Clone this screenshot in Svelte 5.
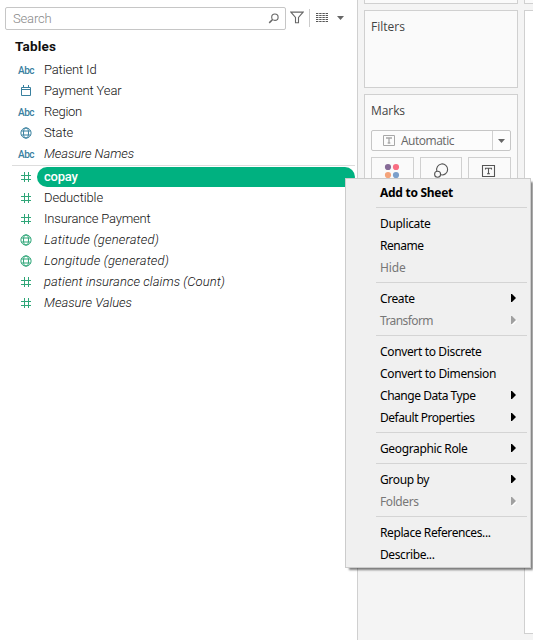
<script>
  const dimensions = [
    { icon: 'abc', label: 'Patient Id', width: 52.5 },
    { icon: 'date', label: 'Payment Year', width: 77.5 },
    { icon: 'abc', label: 'Region', width: 38 },
    { icon: 'globe', label: 'State', width: 29 },
    { icon: 'abc', label: 'Measure Names', width: 90, italic: true },
  ];
  const measures = [
    { icon: 'hash', label: 'copay', width: 33.5, selected: true },
    { icon: 'hash', label: 'Deductible', width: 59 },
    { icon: 'hash', label: 'Insurance Payment', width: 106.5 },
    { icon: 'globe', label: 'Latitude (generated)', width: 115, italic: true },
    { icon: 'globe', label: 'Longitude (generated)', width: 125, italic: true },
    { icon: 'hash', label: 'patient insurance claims (Count)', width: 181, italic: true },
    { icon: 'hash', label: 'Measure Values', width: 88, italic: true },
  ];
  const menu = [
    [{ label: 'Add to Sheet', width: 73, bold: true }],
    [{ label: 'Duplicate', width: 50.5 }, { label: 'Rename', width: 43.5 }, { label: 'Hide', width: 25.5, off: true }],
    [{ label: 'Create', width: 34.5, sub: true }, { label: 'Transform', width: 53, sub: true, off: true }],
    [
      { label: 'Convert to Discrete', width: 101.5 },
      { label: 'Convert to Dimension', width: 116 },
      { label: 'Change Data Type', width: 95.5, sub: true },
      { label: 'Default Properties', width: 94.5, sub: true },
    ],
    [{ label: 'Geographic Role', width: 87.5, sub: true }],
    [{ label: 'Group by', width: 49, sub: true }, { label: 'Folders', width: 38.5, sub: true, off: true }],
    [{ label: 'Replace References...', width: 110.5 }, { label: 'Describe...', width: 54.5 }],
  ];

  function track(node, width) {
    const natural = node.getBoundingClientRect().width;
    node.style.letterSpacing = (width - natural) / node.textContent.length + 'px';
  }
</script>

{#snippet fieldIcon(kind)}
  {#if kind === 'abc'}
    <span class="abc" use:track={16}>Abc</span>
  {:else if kind === 'date'}
    <svg width="12" height="12" viewBox="0 0 12 12"><path d="M1.5 2.5h9v8h-9zM1 4.5h10M3.5 0v3M8.5 0v3" /></svg>
  {:else if kind === 'globe'}
    <svg width="12" height="12" viewBox="0 0 12 12"><circle cx="6" cy="6" r="5.1" /><ellipse cx="6" cy="6" rx="2.5" ry="5.1" /><path d="M1.5 4h9M1.5 8h9" /></svg>
  {:else}
    <svg width="12" height="12" viewBox="0 0 12 12"><path d="M4.5 1v10M8.5 1v10M1 4.5h10M1 8.5h10" /></svg>
  {/if}
{/snippet}

{#snippet fieldRow(f)}
  <li class="row" class:italic={f.italic} class:selected={f.selected}>
    <span class="icon">{@render fieldIcon(f.icon)}</span>
    <span class="pill"><span class="label" use:track={f.width}>{f.label}</span></span>
  </li>
{/snippet}

<div class="app">
  <section class="data">
    <div class="toolbar">
      <div class="search">
        <span use:track={38.5}>Search</span>
        <svg width="11" height="11" viewBox="0 0 11 11"><circle cx="6.9" cy="4.2" r="3.2" /><path d="M4.6 6.5L1.2 9.9" stroke-width="1.5" /></svg>
      </div>
      <svg class="funnel" width="14" height="13" viewBox="0 0 14 13"><path d="M.9 1.1h12.2L8.5 6.5v5.2h-3V6.5z" /></svg>
      <i class="bar"></i>
      <svg class="grid" width="12" height="9" viewBox="0 0 12 9"><path d="M0 .5h12M0 2.5h12M0 4.5h12M0 6.5h12M0 8.5h12" stroke-dasharray="2.4 .8" /></svg>
      <svg class="caret" width="7" height="4" viewBox="0 0 7 4"><path d="M0 0h7L3.5 4z" /></svg>
    </div>
    <h2><span use:track={41}>Tables</span></h2>
    <ul class="dims">{#each dimensions as f}{@render fieldRow(f)}{/each}</ul>
    <ul class="meas">{#each measures as f}{@render fieldRow(f)}{/each}</ul>
  </section>

  <section class="shelves">
    <div class="card stub"></div>
    <div class="card filters"><span use:track={34}>Filters</span></div>
    <div class="card marks">
      <span use:track={34}>Marks</span>
      <div class="select">
        <svg width="12" height="11" viewBox="0 0 12 11"><path d="M.5.5h11v10H.5z" /><path d="M3 3h6M6 3v5M4.7 8h2.6" stroke-width="1.3" /></svg>
        <span class="auto" use:track={53}>Automatic</span>
        <span class="drop"><svg width="7" height="4" viewBox="0 0 7 4"><path d="M0 0h7L3.5 4z" /></svg></span>
      </div>
      <div class="tiles">
        <div class="tile">
          <svg width="16" height="16" viewBox="0 0 16 16"><circle cx="4" cy="4" r="3.1" fill="#866b97" /><circle cx="12" cy="4" r="3.1" fill="#f86d82" /><circle cx="4" cy="12" r="3.1" fill="#f4a37a" /><circle cx="12" cy="12" r="3.1" fill="#7b9fca" /></svg>
        </div>
        <div class="tile">
          <svg class="line" width="16" height="16" viewBox="0 0 16 16"><path d="M3.9 8.1A5.5 5.5 0 1 1 8 11.8" /><circle cx="4.6" cy="11.3" r="3" /></svg>
        </div>
        <div class="tile">
          <svg class="line" width="16" height="16" viewBox="0 0 16 16"><path d="M1.5 2.5h12v11h-12zM4.5 6.5V5.2h6v1.3M7.5 5.2v5.6M6 10.8h3" /></svg>
        </div>
      </div>
    </div>
  </section>

  <section class="view">
    <div class="top"></div>
    <div class="sheet"></div>
  </section>

  <div class="menu">
    {#each menu as group}
      <div class="group">
        {#each group as item}
          <div class="item" class:bold={item.bold} class:off={item.off}>
            <span use:track={item.width}>{item.label}</span>
            {#if item.sub}
              <svg width="5" height="8" viewBox="0 0 5 8"><path d="M0 0h1l4 4-4 4H0z" /></svg>
            {/if}
          </div>
        {/each}
      </div>
    {/each}
  </div>
</div>

<style>
  .app {
    position: relative;
    display: flex;
    width: 533px;
    height: 640px;
    overflow: hidden;
    background: #f4f4f4;
    font: 13px/20px 'Open Sans', 'Noto Sans', sans-serif;
    color: #333;
  }
  .app * { box-sizing: border-box; }
  span { white-space: nowrap; }
  svg { display: block; flex: none; }
  ul { margin: 0; padding: 0; list-style: none; }

  .data { width: 357px; height: 640px; background: #fff; flex: none; font-family: Roboto, sans-serif; font-weight: 300; }
  .toolbar { display: flex; padding: 7px 0 0 5px; height: 36px; }
  .search {
    display: flex; justify-content: space-between; align-items: center;
    width: 281px; height: 23px; padding: 0 6px 0 7px;
    border: 1px solid #c6c6c6; border-radius: 2px; color: #888;
  }
  .search svg { fill: none; stroke: #666; stroke-width: 1.1; }
  .funnel { margin: 4px 0 0 4px; fill: none; stroke: #666; stroke-width: 1.1; }
  .bar { width: 1px; height: 18px; margin: 2px 0 0 5px; background: #ccc; }
  .grid { margin: 6px 0 0 6px; stroke: #555; stroke-width: 1; }
  .caret { margin: 9px 0 0 9px; fill: #666; }
  h2 { margin: 0 0 0 15px; height: 24px; font-size: 13.5px; line-height: 21px; font-weight: 700; color: #111; }

  .dims { color: #39809f; }
  .meas { width: 355px; color: #2fa678; }
  .meas::before { content: ''; display: block; height: 1px; margin: 0 0 1px 12px; background: #ddd; }
  .row { display: flex; height: 21px; }
  .icon { width: 37px; height: 20px; display: flex; align-items: center; padding-left: 20px; }
  .icon svg { fill: none; stroke: currentColor; stroke-width: 1; }
  .abc { margin-left: -2px; font-size: 10px; font-weight: 500; line-height: 20px; padding-top: 1px; }
  .pill { flex: 1; height: 20px; padding-left: 7px; border-radius: 10px; color: #111; line-height: 20px; }
  .italic .pill { font-style: italic; }
  .selected .pill { background: #00b180; color: #fff; font-weight: 500; }

  .shelves { width: 161px; padding-left: 6px; border-left: 1px solid #d0d0d0; display: flex; flex-direction: column; gap: 6px; flex: none; }
  .card { border: 1px solid #d0d0d0; background: #fafafa; padding: 6px; color: #444; font-size: 12px; }
  .stub { height: 4px; padding: 0; border-top: 0; }
  .filters { height: 78px; }
  .marks { height: 180px; }
  .select { display: flex; align-items: center; height: 21px; margin-top: 9px; border: 1px solid #c6c6c6; border-radius: 2px; width: 140px; padding-left: 11px; color: #666; background: #fcfcfc; }
  .select svg { fill: none; stroke: #a8a8a8; }
  .auto { margin-left: 6px; }
  .drop { margin-left: auto; width: 18px; height: 19px; border-left: 1px solid #d0d0d0; display: flex; align-items: center; justify-content: center; }
  .select .drop svg { fill: #666; stroke: none; }
  .tiles { display: flex; gap: 6px; margin-top: 6px; }
  .tile { width: 43px; height: 40px; border: 1px solid #d0d0d0; padding: 5px 0 0 12px; }
  .tile .line { fill: none; stroke: #555; stroke-width: 1.1; }

  .view { margin-left: 6px; width: 40px; flex: none; display: flex; flex-direction: column; gap: 6px; }
  .top { height: 4px; background: #fafafa; border: 1px solid #d0d0d0; border-top: 0; }
  .sheet { height: 624px; background: #fff; border: 1px solid #d0d0d0; }

  .menu {
    position: absolute; left: 345px; top: 178px; width: 186px; height: 390px;
    padding-top: 3px; background: #f0f0f0; border: 1px solid #ccc;
    box-shadow: 3px 3px 2px -1px rgba(0, 0, 0, 0.5);
    color: #000; font: 12px/22px 'Noto Sans', sans-serif;
  }
  .group + .group::before { content: ''; display: block; height: 1px; margin: 3px 3px 5px 30px; background: #d4d4d4; }
  .item { display: flex; justify-content: space-between; height: 22px; padding: 0 14px 0 34px; }
  .item svg { margin-top: 6px; }
  .bold { font-weight: 700; }
  .off { color: #777; }
  .off svg { fill: #a0a0a0; filter: drop-shadow(1px 1px 0 #fff); }
</style>
